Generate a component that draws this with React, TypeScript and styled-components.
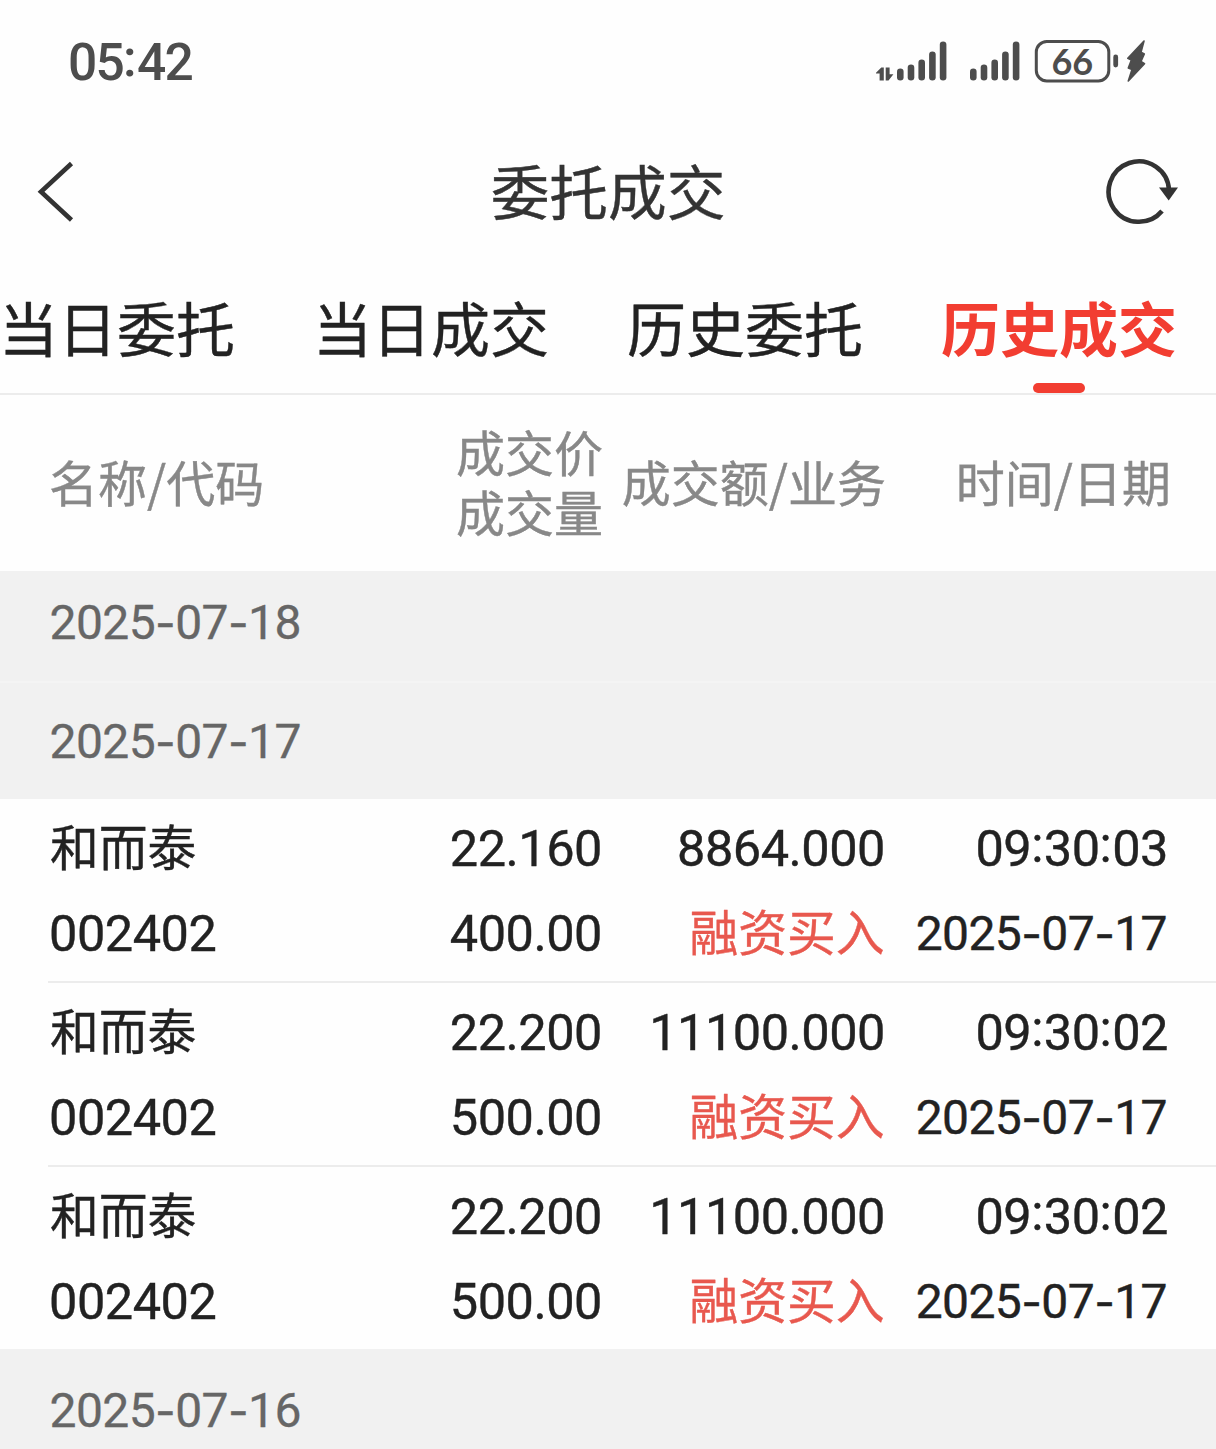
import React from "react";
import styled, { createGlobalStyle } from "styled-components";

const Global = createGlobalStyle`
  * { box-sizing: border-box; }
  body {
    margin: 0;
    background: #fefefe;
    font-family: Roboto, "Noto Sans CJK SC", sans-serif;
  }
`;

const Screen = styled.div`
  width: 1216px;
  height: 1449px;
  overflow: hidden;
  color: #222;
  white-space: nowrap;
`;

const StatusBar = styled.header`
  height: 125px;
  padding: 0 69px 0 68px;
  display: flex;
  justify-content: space-between;
  color: #4d4d4d;
`;

const Clock = styled.div`
  font-size: 51.5px;
  font-weight: 500;
  line-height: 125px;
  letter-spacing: -1.8px;
`;

const StatusIcons = styled.svg`
  width: 272px;
  height: 46px;
  margin-top: 38px;
  fill: currentColor;
  font-family: Lato, sans-serif;
  font-weight: 700;
`;

const NavBar = styled.nav`
  height: 134px;
  padding: 0 37px;
  display: flex;
  align-items: center;
  justify-content: space-between;
  color: #333;
`;

const NavIcon = styled.svg`
  width: 74px;
  height: 70px;
  fill: none;
  stroke: currentColor;
`;

const Title = styled.h1`
  margin: 0;
  padding-bottom: 4px;
  font: 400 58.7px/84px "Noto Sans CJK SC", sans-serif;
  -webkit-text-stroke: 0.4px currentColor;
`;

const Tabs = styled.div`
  height: 136px;
  margin-left: -1px;
  border-bottom: 2px solid #ececec;
  display: flex;
  gap: 78px;
`;

const Tab = styled.div<{ $active?: boolean }>`
  display: flex;
  flex-direction: column;
  justify-content: space-between;
  align-items: center;
  font: ${(p) => (p.$active ? 700 : 400)} 59px/84px "Noto Sans CJK SC", sans-serif;
  color: ${(p) => (p.$active ? "#f23d31" : "#222")};
  -webkit-text-stroke: ${(p) => (p.$active ? "0" : "0.4px")} currentColor;
  padding-top: 26px;
`;

const Underline = styled.i`
  width: 52px;
  height: 10px;
  border-radius: 5px;
  background: #f23d31;
`;

const Columns = styled.div`
  display: grid;
  grid-template-columns: 1fr 283px 283px 283px;
  padding-left: 49px;
  padding-right: 47px;
`;

const TableHead = styled(Columns)`
  height: 176px;
  padding-bottom: 5px;
  align-items: center;
  color: #888;
  font: 400 49px/60px "Noto Sans CJK SC", sans-serif;
  -webkit-text-stroke: 0.4px currentColor;
`;

const HeadCell = styled.div<{ $right?: boolean; $last?: boolean }>`
  text-align: ${(p) => (p.$right ? "right" : "left")};
  margin-right: ${(p) => (p.$last ? -2 : 0)}px;
`;

const DateBand = styled.div<{ $height: number; $lift?: number }>`
  height: ${(p) => p.$height}px;
  padding: 0 0 0 49.5px;
  background: #f1f1f1;
  color: #666;
  font-size: 48px;
  line-height: ${(p) => 125 - (p.$lift ?? 0)}px;
  letter-spacing: -0.6px;
  -webkit-text-stroke: 0.3px currentColor;
`;

const BandLine = styled.div`
  height: 2px;
  background: #f4f4f4;
`;

const Row = styled(Columns)<{ $last?: boolean }>`
  height: ${(p) => (p.$last ? 182 : 184)}px;
  padding-top: 7px;
  grid-template-rows: 85px 85px;
  background: ${(p) =>
    p.$last ? "none" : "linear-gradient(#ececec, #ececec) 48px 100% / 100% 2px no-repeat"};
`;

const Cell = styled.div<{ $kind?: "name" | "date" | "side"; $right?: boolean }>`
  text-align: ${(p) => (p.$right ? "right" : "left")};
  line-height: ${(p) => (p.$kind === "name" || p.$kind === "side" ? 88 : 85)}px;
  padding-right: ${(p) => (p.$kind === "date" ? 2 : p.$kind ? 1.4 : 1)}px;
  padding-left: ${(p) => (p.$kind === "name" ? 1 : 0)}px;
  font-size: ${(p) => (p.$kind === "date" ? 48 : p.$kind ? 48.8 : 50.5)}px;
  letter-spacing: ${(p) => (p.$kind === "date" ? -0.6 : p.$kind ? 0 : -0.5)}px;
  color: ${(p) => (p.$kind === "side" ? "#e8584e" : "#222")};
  -webkit-text-stroke: 0.4px currentColor;
`;

const Dash = styled.span`
  font-family: Inter, sans-serif;
  font-size: 45px;
`;

const Colon = styled.span`
  position: relative;
  top: -4px;
  letter-spacing: 0.4px;
`;

function Digits({ value }: { value: string }) {
  return (
    <>
      {value.split(/([-:])/).map((part, i) =>
        part === "-" ? <Dash key={i}>-</Dash> : part === ":" ? <Colon key={i}>:</Colon> : part,
      )}
    </>
  );
}

const tabs = ["当日委托", "当日成交", "历史委托", "历史成交"];

const trades = [
  { price: "22.160", amount: "8864.000", time: "09:30:03", volume: "400.00" },
  { price: "22.200", amount: "11100.000", time: "09:30:02", volume: "500.00" },
  { price: "22.200", amount: "11100.000", time: "09:30:02", volume: "500.00" },
];

const barHeights = [12, 16, 21, 29, 39];

function Bars({ x }: { x: number }) {
  return (
    <>
      {barHeights.map((h, i) => (
        <rect key={i} x={x + i * 10.7} y={42.5 - h} width="6.6" height={h} rx="3.3" />
      ))}
    </>
  );
}

export default function App() {
  return (
    <Screen>
      <Global />
      <StatusBar>
        <Clock>
          <Digits value="05:42" />
        </Clock>
        <StatusIcons viewBox="875 0 272 46">
          <path d="M876 34.8 L881.3 29.5 H883.8 V42.5 H879.6 V35.6 H876Z M885.7 29.5 H889.6 V36.2 H893.4 L888.5 42.5 H885.7Z" />
          <Bars x={897} />
          <Bars x={970} />
          <rect x="1036.3" y="3.5" width="72.5" height="39.5" rx="10.5" fill="none" stroke="currentColor" strokeWidth="3" />
          <text x="1072.3" y="37.2" fontSize="36" textAnchor="middle">66</text>
          <rect x="1113.3" y="16.5" width="4.8" height="13" rx="2.4" />
          <path
            d="M1144 3 L1127.8 20.3 L1131.4 22 L1128.3 30 L1132 31.5 L1128.3 43 L1144.5 25.7 L1141 23.5 L1144.3 16 L1141 14.3Z"
            stroke="currentColor"
            strokeWidth="1.6"
            strokeLinejoin="round"
          />
        </StatusIcons>
      </StatusBar>
      <NavBar>
        <NavIcon viewBox="37 157 74 70" strokeWidth="4.6">
          <path d="M71.5 163.5 L41 191.7 L71.5 220" />
        </NavIcon>
        <Title>委托成交</Title>
        <NavIcon viewBox="1105 157 74 70" strokeWidth="4.6">
          <path d="M1162 211 A30.2 30.2 0 1 1 1169 190" />
          <path d="M1159 187.5 H1178 L1168.7 200.5Z" fill="currentColor" stroke="none" />
        </NavIcon>
      </NavBar>
      <Tabs>
        {tabs.map((name, i) => (
          <Tab key={name} $active={i === 3}>
            {name}
            {i === 3 && <Underline />}
          </Tab>
        ))}
      </Tabs>
      <TableHead>
        <HeadCell>名称/代码</HeadCell>
        <HeadCell $right>
          成交价
          <br />
          成交量
        </HeadCell>
        <HeadCell $right>成交额/业务</HeadCell>
        <HeadCell $right $last>时间/日期</HeadCell>
      </TableHead>
      <DateBand $height={110} $lift={21}>
        <Digits value="2025-07-18" />
      </DateBand>
      <BandLine />
      <DateBand $height={116} $lift={7}>
        <Digits value="2025-07-17" />
      </DateBand>
      {trades.map((t, i) => (
        <Row key={i} $last={i === 2}>
          <Cell $kind="name">和而泰</Cell>
          <Cell $right>{t.price}</Cell>
          <Cell $right>{t.amount}</Cell>
          <Cell $right>
            <Digits value={t.time} />
          </Cell>
          <Cell>002402</Cell>
          <Cell $right>{t.volume}</Cell>
          <Cell $kind="side" $right>融资买入</Cell>
          <Cell $kind="date" $right>
            <Digits value="2025-07-17" />
          </Cell>
        </Row>
      ))}
      <DateBand $height={100} $lift={1}>
        <Digits value="2025-07-16" />
      </DateBand>
    </Screen>
  );
}
